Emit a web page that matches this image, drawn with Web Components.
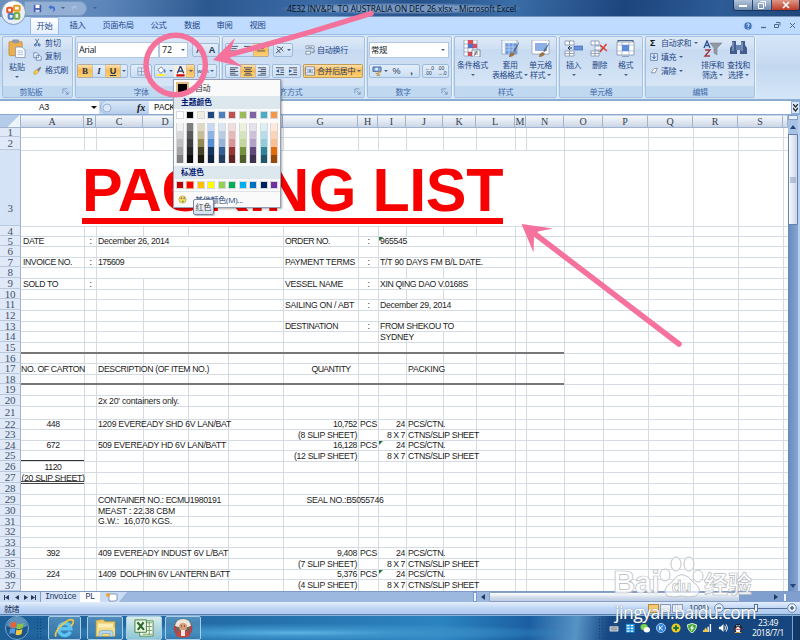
<!DOCTYPE html>
<html lang="zh-CN">
<head>
<meta charset="utf-8">
<title>Packing list</title>
<style>
html,body{margin:0;padding:0;width:800px;height:640px;overflow:hidden}
</style>
</head>
<body>
<excel-window></excel-window>
<script>
const UI='"Open Sans","Noto Sans CJK SC",sans-serif';
const ICONS={
save:'<path d="M1 1h9v9H1z" fill="#4356b4"/><path d="M3 1h5v4H3z" fill="#fff"/><path d="M3 7h5v3H3z" fill="#cfd8f4"/>',
undo:'<path d="M2 4l3-3v2q5-1 5 4-1 3-4 3 2-1 2-3 0-2-3-2v2z" fill="#3b6fd0"/>',
redo:'<path d="M10 4L7 1v2Q2 2 2 7q1 3 4 3-2-1-2-3 0-2 3-2v2z" fill="#a9bfdf"/>',
office:'<circle cx="13" cy="13" r="12.500" fill="#e9eff8" stroke="#7f95b5"/><ellipse cx="13" cy="8" rx="9" ry="6" fill="#fff"/><g fill="none" stroke-width="2.200"><rect x="6.500" y="8" width="5" height="5" rx="1.200" stroke="#e2562a"/><rect x="13.500" y="6" width="6" height="5" rx="1.200" stroke="#e89a25"/><rect x="8" y="14.500" width="5" height="5" rx="1.200" stroke="#4a7fd0"/><rect x="14" y="13.500" width="5" height="6" rx="1.200" stroke="#79ae3a"/></g>',
paste:'<rect x="1" y="2" width="14" height="15" rx="1.500" fill="#edae4e" stroke="#b98233" stroke-width=".7"/><rect x="4.500" y="0" width="7" height="4" rx="1" fill="#8e98a6"/><path d="M8 8h7l3 3v8H8z" fill="#fff" stroke="#788eb1" stroke-width=".8"/><path d="M10 12h6M10 14h6M10 16h6" stroke="#8fa9d0" stroke-width=".7"/>',
cut:'<path d="M3 1l4 7M7 1L3 8" stroke="#54749d" stroke-width="1.100"/><circle cx="3" cy="8.500" r="1.300" fill="none" stroke="#294f91"/><circle cx="7.500" cy="8.500" r="1.300" fill="none" stroke="#294f91"/>',
copy:'<path d="M1 1h4l2 2v4H1zM4 4h4l2 2v4H4z" fill="#fff" stroke="#4668a5" stroke-width=".9"/>',
brush:'<path d="M1 7l4-3 2 3-3 3H1z" fill="#f5c945" stroke="#a97e28" stroke-width=".5"/><path d="M5 4l4-3 1 1-3 5z" fill="#777e8e"/>',
border:'<path d="M1 1h9v9H1zM5.500 1v9M1 5.500h9" fill="none" stroke="#7c91b5" stroke-width=".8"/>',
fill:'<path d="M2 4l4-3 3 4-4 3z" fill="#fff" stroke="#586e91" stroke-width=".8"/><path d="M9 4q2 2 0 3" stroke="#3565ba" fill="none" stroke-width="1.200"/><path d="M1 9h9v2H1z" fill="#ffef20"/>',
fontc:'<path d="M2 8L5.500 0 9 8M3.500 5.500h4" stroke="#283a68" fill="none" stroke-width="1.400"/><path d="M1 9h9v2.500H1z" fill="#d40b0b"/>',
vtop:'<path d="M1 1.500h9M2.500 4h6M1 6.500h9" stroke="#505b6c" stroke-width="1.100"/>',
left:'<path d="M1 2h9M1 4h6M1 6h9M1 8h6M1 10h9" stroke="#3c4657"/>',
center:'<path d="M1 2h9M2.500 4h6M1 6h9M2.500 8h6M1 10h9" stroke="#3c4657"/>',
right:'<path d="M1 2h9M4 4h6M1 6h9M4 8h6M1 10h9" stroke="#3c4657"/>',
indl:'<path d="M1 2h9M6 4.500h4M6 7h4M1 9.500h9" stroke="#3c4657"/><path d="M4.500 3.500v4L1 5.500z" fill="#2c57a7"/>',
indr:'<path d="M1 2h9M6 4.500h4M6 7h4M1 9.500h9" stroke="#3c4657"/><path d="M1 3.500v4l3.500-2z" fill="#2c57a7"/>',
orient:'<path d="M1 9l8-7M2 4l4 5" stroke="#39465a" stroke-width="1"/><path d="M2 2l4 1 3 4" stroke="#39465a" fill="none" stroke-width=".9"/>',
wrap:'<path d="M1 1h9v3H1zM1 7h5v3H1z" fill="#fff" stroke="#667993" stroke-width=".8"/><path d="M3 2.500h5M10 5v3H7" stroke="#667993" fill="none"/>',
merge:'<path d="M.5 1h10v9H.5z" fill="#fff" stroke="#59729c" stroke-width=".8"/><path d="M.5 3.500h10M.5 7.500h10" stroke="#59729c" stroke-width=".7"/><path d="M2 5.500h2M7 5.500h2M4.500 7l1-3 1 3" stroke="#274e98" fill="none" stroke-width=".8"/>',
money:'<path d="M1 1h9v5H1z" fill="#7fa5d8" stroke="#315a99" stroke-width=".8"/><circle cx="5" cy="3.500" r="1.500" fill="#e9f1fb"/><path d="M4 8h4M5 10h4M7 6.500h3" stroke="#c08a22" stroke-width="1.300"/>',
cond:'<path d="M1 0h13v16H1zM1 4h13M1 8h13M1 12h13M5 0v16M10 0v16" fill="#fff" stroke="#7f93b3" stroke-width=".7"/><path d="M5 0h5v4H5zM5 12h5v4H5z" fill="#dc4b57"/><path d="M5 4h5v4H5z" fill="#4f74c6"/><path d="M10 4h4v4h-4z" fill="#dc4b57"/><rect x="9" y="10" width="8" height="7" fill="#fff" stroke="#586a86" stroke-width=".7"/><path d="M11 12h4M11 14h4M14 11l-3 5" stroke="#333" stroke-width=".6"/>',
tblfmt:'<path d="M1 0h15v14H1z" fill="#fff" stroke="#8296b6" stroke-width=".7"/><path d="M4 3h12v11H4z" fill="#6f9add"/><path d="M1 3h15M1 7h15M1 10h15M4 0v14M8 0v14M12 0v14" stroke="#d3dff1" stroke-width=".7"/><path d="M18 2l-6 9 2 1 4-9z" fill="#566b8b"/><path d="M8 17q0-4 4-5l2 2q-2 3-6 3z" fill="#9a7346"/>',
cellsty:'<path d="M1 0h17v14H1z" fill="#fff" stroke="#8296b6" stroke-width=".7"/><path d="M4 3h12v8H4z" fill="#8fb0e6"/><path d="M18 3l-6 8 2 1 4-8z" fill="#566b8b"/><path d="M8 17q0-4 4-5l2 2q-2 3-6 3z" fill="#9a7346"/>',
ins:'<path d="M1 1h9v4H1zM5.500 1v4M1 11h9v5H1zM5.500 11v5M1 13.500h9" fill="#fff" stroke="#7e8ea8" stroke-width=".8"/><path d="M10 6h9v4h-9z" fill="#6492dc" stroke="#3c66ad" stroke-width=".6"/><path d="M8 8H4M6 6L4 8l2 2" stroke="#2b3e63" fill="none"/>',
del:'<path d="M1 1h8v4H1zM5 1v4M5 6h6v4H5zM1 11h8v5H1zM5 11v5M1 13.500h8" fill="#fff" stroke="#7e8ea8" stroke-width=".8"/><path d="M10 5l7 6M16.500 4L10 12" stroke="#dc3b31" stroke-width="1.500"/>',
fmt:'<path d="M1 2h17v13H1z" fill="#fff" stroke="#7e8ea8" stroke-width=".8"/><path d="M1 5h17M1 11h17M6 2v13M13 2v13" stroke="#9fb0cc" stroke-width=".7"/><path d="M6 5h7v6H6z" fill="#5f8cda"/><path d="M2 0v2M17 0v2M2 .5h15M6 17h7" stroke="#44597f" stroke-width=".9"/>',
down:'<rect x="1" y="1" width="9" height="9" fill="#e7f0fb" stroke="#4567a4"/><path d="M5.500 2v5M3 5l2.500 3L8 5" stroke="#214fa6" fill="none" stroke-width="1.300"/>',
erase:'<path d="M2 7l4-5h4L7 8H2z" fill="#fff" stroke="#5c6981" stroke-width=".9"/>',
sort:'<path d="M1 8l3-7 3 7M2 5.500h4" stroke="#35559c" fill="none" stroke-width="1.400"/><path d="M2 10h5l-5 6h5" stroke="#a23647" fill="none" stroke-width="1.400"/><path d="M7 3h12l-5 5v7l-3-2V8z" fill="#929aa5" stroke="#6d747e" stroke-width=".5"/>',
find:'<path d="M3 1h4v4l1 2v7H1V8l2-3zM12 1h4v4l2 3v6h-7V7l1-2z" fill="#425d8d"/><path d="M7 5h5v5H7z" fill="#6683b4"/><path d="M4 2v9M13 2v9" stroke="#a9bde0"/>',
help:'<circle cx="5.500" cy="5.500" r="4.500" fill="#3d73c2" stroke="#bcd3f0"/><path d="M4 4q1.500-2 3 0 0 1-1.500 1.500v1M5.500 7.500v1" stroke="#fff" fill="none"/>',
launch:'<path d="M1 6V1h5M3 3l4 4M7 4v3H4" stroke="#6f8db8" fill="none" stroke-width=".9"/>',
pal:'<circle cx="5.500" cy="5.500" r="4.500" fill="#eedd63" stroke="#a7913a" stroke-width=".6"/><circle cx="4" cy="4" r="1" fill="#bf3131"/><circle cx="7.500" cy="4" r="1" fill="#3863bd"/><circle cx="6" cy="8" r="1" fill="#2d8a3f"/>',
newtab:'<path d="M4 2h8v6l-2 1H4z" fill="#fff" stroke="#7287ab" stroke-width=".8"/><circle cx="3" cy="3" r="2" fill="#eaa43c"/>',
orb:'<circle cx="12" cy="12" r="11.500" fill="#1e5587" stroke="#76a9cf"/><path d="M2 10a10 9 0 0 1 20 0q-10 5-20 0z" fill="#7eb3d6" opacity=".65"/><path d="M6 7q3-2 5.500 0l-1 5Q8 10.500 5 12z" fill="#e86236"/><path d="M12.500 7.500q3 1.500 6-.5l-1 5q-3 2-6 .5z" fill="#8bc53f"/><path d="M5 13q3-1.500 5.500 0l-1 5Q7 16.500 4 18z" fill="#4d9be0"/><path d="M11.500 13.500q3 1.500 6-.5l-1 5q-3 2-6 .5z" fill="#fbca3a"/>',
ie:'<path d="M17 14A6.300 6.300 0 1 1 17.500 10.800H6" fill="none" stroke="#5cc4f4" stroke-width="3.800"/><path d="M2 19Q0 15 8 7 17-1 20 2q1 2-2 6" fill="none" stroke="#f0c63c" stroke-width="1.800"/>',
folder:'<path d="M1 2l7-1 2 2h10v15H1z" fill="#eacb69" stroke="#b49547" stroke-width=".6"/><path d="M3 5h15v5H3z" fill="#f9edb8"/><path d="M2 9h18v8H2z" fill="#f2dc8c"/><path d="M4 18v-3q0-3 3-3h8q3 0 3 3v3h-3v-3H7v3z" fill="#b5d9ed" stroke="#739eba" stroke-width=".6"/>',
excel:'<path d="M6 2h14v16H6z" fill="#fff" stroke="#55894f"/><path d="M9 4h10M9 8h10M9 12h10M9 16h10M16 3v14" stroke="#66a15a"/><path d="M1 1h12v13H1z" fill="#eef8e8" stroke="#3d7e38"/><path d="M3.500 3.500l7 8M10 3.500l-6 8" stroke="#276a2a" stroke-width="2.200"/>',
avatar:'<circle cx="10" cy="10" r="9.500" fill="#66695b"/><path d="M2 8q1-7 8-7t8 7l-3 1H5z" fill="#eee5dc"/><circle cx="10" cy="9" r="4" fill="#d99b77"/><path d="M3 18q1-6 7-6t7 6q-7 3-14 0z" fill="#c84343"/><path d="M8 12h4v6H8z" fill="#f1eae2"/><path d="M8 8h1M11 8h1" stroke="#322"/><path d="M2 8q0 5 2 7M18 8q0 5-2 7" stroke="#c33c45" stroke-width="2" fill="none"/>',
kbd:'<path d="M1 4h9v5H1z" fill="#bfc4c8" stroke="#e5e8ea" stroke-width=".6"/><path d="M2 5.500h7M2 7.500h7M6 4V2h3" stroke="#59626b" stroke-width=".6" fill="none"/>',
t1:'<rect x="1" y="1" width="9.500" height="9.500" fill="#2a9ce8"/><path d="M2 3h3M2 6h3M2 9h3M6.500 3H9M6.500 6H9M6.500 9H9" stroke="#fff" stroke-width="1.400"/>',
t2:'<ellipse cx="4.500" cy="4.500" rx="4" ry="3.500" fill="#78d34f"/><ellipse cx="7.500" cy="7.500" rx="3.500" ry="3" fill="#fff"/>',
t3:'<circle cx="5.500" cy="5.500" r="5" fill="#2c80dc" stroke="#d8ecff" stroke-width=".8"/><path d="M4 3v5M7.500 3L4.500 5.500 7.500 8" stroke="#fff" fill="none"/>',
t4:'<circle cx="5.500" cy="5.500" r="5" fill="#f4ce26"/><path d="M5.500 2.500v6M2.500 5.500h6" stroke="#15783a" stroke-width="2.200"/>',
t5:'<path d="M5.500.5l5 1.500q0 6-5 9-5-3-5-9z" fill="#4aaa3c" stroke="#e8f7e3"/><path d="M6 2L3.500 6H5L4.500 9 8 5H6z" fill="#fff"/>',
t6:'<path d="M1 10h1V8H1zM3.500 10h1.500V6.500H3.500zM6 10h1.500V4H6zM8.500 10H10V1H8.500z" fill="#fff"/><path d="M1 10l3-5 3 5z" fill="#f3c834"/>',
t7:'<path d="M1 4h2l3-3v9L3 7H1z" fill="#fff"/><path d="M7.500 3q1.500 2.500 0 5M9 1.500q3 4 0 8" stroke="#fff" fill="none"/>',
t8:'<ellipse cx="5.500" cy="6" rx="4" ry="5" fill="#141a20"/><ellipse cx="5.500" cy="7.500" rx="2.500" ry="3" fill="#fff"/><path d="M2 5.500q3.500 2 7 0v1.500q-3.500 1.500-7 0z" fill="#e02f2b"/><circle cx="4.300" cy="3" r=".8" fill="#fff"/><circle cx="6.700" cy="3" r=".8" fill="#fff"/><path d="M2 10.500h3M6 10.500h3" stroke="#efaa28" stroke-width="1.300"/>'
};
function def(name,css,html,after){
  const t=document.createElement('template');
  t.innerHTML='<style>'+css+'</style>'+html;
  customElements.define(name,class extends HTMLElement{
    connectedCallback(){
      if(this.shadowRoot)return;
      this.attachShadow({mode:'open'}).append(t.content.cloneNode(true));
      if(after)after(this,this.shadowRoot);
    }
  });
}
/* Inline SVG glyph: name, w, h and the view box size v. */
def('x-icon',':host{display:inline-block;flex:none;line-height:0}svg{display:block}','',(el,r)=>{
  const w=el.getAttribute('w')||11,h=el.getAttribute('h')||w,v=el.getAttribute('v')||'11 11';
  r.innerHTML+=`<svg width="${w}" height="${h}" viewBox="0 0 ${v}">${ICONS[el.getAttribute('name')]}</svg>`;
});
/* Text tracked so that it fills the width given in w. */
def('fit-text',':host{display:inline-block;white-space:pre;flex:none}span{display:inline-block}','<span></span>',(el,r)=>{
  const s=r.querySelector('span'),t=el.getAttribute('t'),w=+el.getAttribute('w');
  s.textContent=t;
  if(w){const n=s.getBoundingClientRect().width;s.style.letterSpacing=((w-n)/t.length)+'px';}
});
def('drop-arrow',':host{display:inline-block;flex:none;width:0;height:0;border:2px solid transparent;border-top:2.500px solid #45618d;border-bottom:0}','');

def('title-bar',`:host{display:flex;height:17px;align-items:center;background:linear-gradient(100deg,#6d91bd 0,#5d87bb 13%,#2c5890 26%,#3c6ba6 40%,#265089 52%,#3a6da6 64%,#1d447d 78%,#2d5c96 90%,#1f467a);font:8.300px ${UI};border-bottom:1px solid #7594bd;box-sizing:border-box}
.q{display:flex;align-items:center;gap:5px;margin-left:24px;padding:1px 9px 1px 8px;width:63px;box-sizing:border-box;height:15px;background:#93afd3;border:1px solid #7898c4;border-radius:0 8px 8px 0}
.t{margin-left:185px;padding:0 5px;color:#060d1a;background:radial-gradient(ellipse,#8eacd2bb 45%,transparent 74%);border-radius:6px}
.w{margin-left:auto;display:flex;align-self:flex-start;height:10px;border:1px solid #16345f;border-top:0;border-radius:0 0 3px 3px;overflow:hidden;color:#fff}
.w span{width:18px;display:flex;align-items:center;justify-content:center;border-right:1px solid #26466f;background:linear-gradient(#b5c5da,#6c88ad)}
.w span:last-child{width:27px;background:linear-gradient(#df9788,#bd3a25);border:0}`,
`<div class="q"><x-icon name="save" w="9"></x-icon><x-icon name="undo" w="9"></x-icon><drop-arrow></drop-arrow><x-icon name="redo" w="8"></x-icon></div><drop-arrow style="margin-left:6px"></drop-arrow>
<div class="t"><fit-text w="229" t="4E32 INV&amp;PL TO AUSTRALIA ON DEC 26.xlsx - Microsoft Excel"></fit-text></div>
<div class="w"><span><svg width="8" height="6"><path d="M0 4h8" stroke="#fff" stroke-width="2"/></svg></span><span><svg width="8" height="8"><path d="M2.500.5h5v5M.5 2.500h5v5h-5z" fill="none" stroke="#fff"/></svg></span><span><svg width="8" height="8"><path d="M1 1l6 6M7 1L1 7" stroke="#fff" stroke-width="1.600"/></svg></span></div>`);

def('tab-strip',`:host{display:flex;height:17px;background:#bfdbff;font:8.300px/16px ${UI};color:#1f4787;padding-left:30px;box-sizing:border-box}
div{text-align:center;flex:none}.on{width:29px;background:linear-gradient(#fff,#e4effc);border:1px solid #9bbce8;border-bottom:0;border-radius:2px 2px 0 0;box-sizing:border-box}
.r{margin-left:auto;display:flex;gap:8px;align-items:center;padding-right:4px}`,
`<div class="on"><fit-text t="开始" w="16"></fit-text></div><div style="width:37px"><fit-text t="插入" w="16"></fit-text></div><div style="width:44px"><fit-text t="页面布局" w="31"></fit-text></div><div style="width:37px"><fit-text t="公式" w="16"></fit-text></div><div style="width:30px"><fit-text t="数据" w="16"></fit-text></div><div style="width:35px"><fit-text t="审阅" w="16"></fit-text></div><div style="width:31px"><fit-text t="视图" w="16"></fit-text></div>
<div class="r"><x-icon name="help" w="10"></x-icon><svg width="5" height="6"><path d="M0 4.500h5" stroke="#526a90" stroke-width="1.300"/></svg><svg width="7" height="7"><path d="M2 .5h4v3M.5 2.500h4v3h-4z" fill="none" stroke="#526a90"/></svg><svg width="7" height="7"><path d="M1 1l5 5M6 1L1 6" stroke="#526a90"/></svg></div>`);

def('ribbon-group',`:host{display:flex;flex-direction:column;flex:none;box-sizing:border-box;border:1px solid #a4c0e0;border-radius:2px;background:linear-gradient(#dde9f7,#cfe0f4 20%,#c7daf1 21%,#dbe9f8);box-shadow:1px 0 #edf4fc}
.b{flex:1;min-height:0;overflow:hidden}.l{height:11px;background:#c1d8f1;color:#3e6aaa;font:8px/10px ${UI};display:flex;justify-content:center;align-items:center;position:relative}
:host([launch]) .l{padding-right:13px}
x-icon{position:absolute;right:3px;top:2px}`,`<div class="b"><slot></slot></div><div class="l"><x-icon name="launch" w="7" v="8 8"></x-icon></div>`,(el,r)=>{
  const f=r.querySelector('.l');
  const n=document.createElement('fit-text');n.setAttribute('t',el.getAttribute('label'));n.setAttribute('w',el.getAttribute('lw'));f.prepend(n);
  if(!el.hasAttribute('launch'))f.querySelector('x-icon').remove();
});
def('big-btn',`:host{display:flex;flex-direction:column;align-items:center;flex:none;font:8px/10px ${UI};color:#1f4787}x-icon{margin-bottom:3px}.r{display:flex;align-items:center;height:10px;gap:2px}`,``,(el,r)=>{
  const g=k=>el.getAttribute(k);
  const d=document.createElement('div');
  d.style.display='contents';
  d.innerHTML=`<x-icon name="${g('icon')}" w="19" h="17" v="19 17"></x-icon><div class="r"><fit-text t="${g('a')}" w="${g('aw')}"></fit-text></div><div class="r">${g('b')?`<fit-text t="${g('b')}" w="${g('bw')}"></fit-text>`:''}<drop-arrow></drop-arrow></div>`;
  r.append(d);
});
def('tool-btns',`:host{display:inline-flex;flex:none;height:14px;align-items:center;border:1px solid #9ebbdd;border-radius:2px;box-sizing:border-box;background:linear-gradient(#e4eefa,#cbdef4);font:9px/12px "Liberation Sans",sans-serif;color:#26364f}
::slotted(*){display:flex;align-items:center;justify-content:center;height:12px;box-sizing:border-box}
::slotted(.on){background:linear-gradient(#fde2ae,#f9b951 45%,#fcd075);box-shadow:0 0 0 .5px #c49b5b}`,'<slot></slot>');

def('ribbon-bar',`:host{display:flex;height:66px;gap:2px;padding:1px 2px 1px 2px;background:linear-gradient(#d7e6f8,#c3d8f0 50%,#d5e6f8);border-top:1px solid #9bbce8;border-bottom:1px solid #8faed6;box-sizing:border-box;color:#1f4787;font:8px/10px ${UI}}
.c{display:flex;height:100%}.row{display:flex;align-items:center}.in{background:#fff;border:1px solid #b0c8e6;box-sizing:border-box;height:16px;color:#10151d;display:flex;align-items:center;font-size:9px}
.s{display:flex;align-items:center;gap:3px;height:14px}`,
`<ribbon-group label="剪贴板" lw="23" launch style="width:71px"><div class="c" style="padding:2px 0 0 3px;gap:5px">
 <div style="display:flex;flex-direction:column;align-items:center;width:22px"><x-icon name="paste" w="18" h="20" v="19 20"></x-icon><fit-text t="粘贴" w="16" style="margin-top:3px"></fit-text><drop-arrow style="margin-top:4px"></drop-arrow></div>
 <div style="margin-top:-3px"><div class="s" style="height:13px"><x-icon name="cut" w="9"></x-icon><fit-text t="剪切" w="16"></fit-text></div><div class="s"><x-icon name="copy" w="9"></x-icon><fit-text t="复制" w="16"></fit-text></div><div class="s"><x-icon name="brush" w="9"></x-icon><fit-text t="格式刷" w="23"></fit-text></div></div></div></ribbon-group>
<ribbon-group label="字体" lw="15" launch style="width:145px"><div style="padding:5px 0 0 1px">
 <div class="row"><div class="in" style="width:82px;padding-left:1px"><fit-text t="Arial" w="17"></fit-text></div><div class="in" style="width:29px;padding:0 2px;justify-content:space-between"><fit-text t="72" w="10"></fit-text><drop-arrow></drop-arrow></div>
 <tool-btns style="margin-left:4px"><span style="width:13px;font-size:10px">A</span><span style="width:12px;font-weight:bold">A</span></tool-btns></div>
 <div class="row" style="margin-top:6px;gap:2px"><tool-btns><b class="on" style="width:14px;font-family:Liberation Serif">B</b><i style="width:14px;font-family:Liberation Serif;font-weight:bold">I</i><u class="on" style="width:14px;font-weight:bold">U</u><span style="width:7px"><drop-arrow></drop-arrow></span></tool-btns>
 <tool-btns><span style="width:20px"><x-icon name="border" w="9"></x-icon></span></tool-btns>
 <tool-btns><span style="width:12px"><x-icon name="fill" w="10"></x-icon></span><span style="width:7px"><drop-arrow></drop-arrow></span><span style="width:13px;background:#f5f0e6"><x-icon name="fontc" w="11" v="11 12"></x-icon></span><span class="on" style="width:7px"><drop-arrow></drop-arrow></span></tool-btns>
 <tool-btns><span style="width:10px;font-size:6px">wén</span><span style="width:8px"><drop-arrow></drop-arrow></span></tool-btns></div></div></ribbon-group>
<ribbon-group label="对齐方式" lw="31" launch style="width:143px"><div style="padding:6px 0 0 2px">
 <div class="row"><tool-btns><span style="width:15px"><x-icon name="vtop" w="10"></x-icon></span><span style="width:13px"><x-icon name="vtop" w="10"></x-icon></span><span class="on" style="width:14px"><x-icon name="vtop" w="10"></x-icon></span></tool-btns><tool-btns style="margin-left:4px"><span style="width:12px"><x-icon name="orient" w="10"></x-icon></span><span style="width:6px"><drop-arrow></drop-arrow></span></tool-btns><x-icon name="wrap" w="10" style="margin:0 2px 0 12px"></x-icon><fit-text t="自动换行" w="31"></fit-text></div>
 <div class="row" style="margin-top:7px"><tool-btns><span style="width:15px"><x-icon name="left" w="10"></x-icon></span><span class="on" style="width:14px"><x-icon name="center" w="10"></x-icon></span><span style="width:14px"><x-icon name="right" w="10"></x-icon></span></tool-btns><tool-btns style="margin-left:2px"><span style="width:13px"><x-icon name="indl" w="10"></x-icon></span><span style="width:14px"><x-icon name="indr" w="10"></x-icon></span></tool-btns><tool-btns style="margin-left:2px;border-color:#c39a59"><span class="on" style="width:58px;gap:2px;color:#263c66;font:8px/10px ${UI.replace(/"/g,'')}"><x-icon name="merge" w="10"></x-icon><fit-text t="合并后居中" w="38"></fit-text><drop-arrow></drop-arrow></span></tool-btns></div></div></ribbon-group>
<ribbon-group label="数字" lw="15" launch style="width:85px"><div style="padding:5px 0 0 1px"><div class="in" style="width:80px;padding:0 3px 0 1px;justify-content:space-between;font-size:8.300px"><fit-text t="常规" w="16"></fit-text><drop-arrow></drop-arrow></div>
 <div class="row" style="margin-top:6px;gap:2px"><tool-btns><span style="width:13px"><x-icon name="money" w="10"></x-icon></span><span style="width:6px"><drop-arrow></drop-arrow></span><span style="width:15px">%</span><b style="width:15px">,</b></tool-btns><tool-btns><span style="width:13px;font:5px/5px Liberation Sans;white-space:pre">←.0
.00</span><span style="width:12px;font:5px/5px Liberation Sans;white-space:pre">.00
→.0</span></tool-btns></div></div></ribbon-group>
<ribbon-group label="样式" lw="15" style="width:103px"><div class="c" style="padding:3px 0 0 2px;gap:4px"><big-btn icon="cond" a="条件格式" aw="31"></big-btn><big-btn icon="tblfmt" a="套用" aw="15" b="表格格式" bw="30"></big-btn><big-btn icon="cellsty" a="单元格" aw="23" b="样式" bw="15" style="margin-left:-3px"></big-btn></div></ribbon-group>
<ribbon-group label="单元格" lw="23" style="width:84px"><div class="c" style="padding:3px 0 0 4px;gap:7px"><big-btn icon="ins" a="插入" aw="15"></big-btn><big-btn icon="del" a="删除" aw="15"></big-btn><big-btn icon="fmt" a="格式" aw="15"></big-btn></div></ribbon-group>
<ribbon-group label="编辑" lw="15" style="width:110px"><div class="c" style="padding:0 0 0 4px;gap:2px"><div style="width:49px;margin-top:-1px"><div class="s"><b style="width:8px;font-size:9px;color:#111">Σ</b><fit-text t="自动求和" w="30"></fit-text><drop-arrow></drop-arrow></div><div class="s"><x-icon name="down" w="8"></x-icon><fit-text t="填充" w="15"></fit-text><drop-arrow></drop-arrow></div><div class="s"><x-icon name="erase" w="8"></x-icon><fit-text t="清除" w="15"></fit-text><drop-arrow></drop-arrow></div></div><big-btn icon="sort" a="排序和" aw="23" b="筛选" bw="15" style="margin-top:3px"></big-btn><big-btn icon="find" a="查找和" aw="23" b="选择" bw="15" style="margin-top:3px;margin-left:1px"></big-btn></div></ribbon-group>`);

def('formula-bar',`:host{display:flex;height:15px;background:#c4d9f2;box-sizing:border-box;border-top:1px solid #8aa9d0;border-bottom:1px solid #8aa9d0;color:#111}
.n{width:99px;background:#fff;display:flex;align-items:center;font:9px "Liberation Mono",monospace}.f{width:49px;display:flex;align-items:center;justify-content:flex-end;font:italic bold 10px "Liberation Serif";box-sizing:border-box;padding-right:4px;border-left:1px solid #8aa9d0;border-radius:8px 0 0 8px;margin-left:1px;background:linear-gradient(#d9e7f8,#b7cfec)}
.f svg{margin-right:auto}.v{flex:1;background:#fff;display:flex;align-items:center;font:9px "Liberation Mono",monospace;padding-left:5px}.x{width:9px;text-align:center;border:1px solid #8fb0dd;box-sizing:border-box;background:#d7e7fa}`,
`<div class="n"><fit-text t="A3" w="10" style="margin-left:39px"></fit-text><drop-arrow style="margin-left:42px;border-width:3px;border-top-color:#111;border-bottom:0"></drop-arrow></div><div class="f"><svg width="12" height="12"><circle cx="6" cy="6" r="4" fill="#d9e7f8" stroke="#9bb3d4"/></svg><fit-text t="fx" w="8"></fit-text></div><div class="v"><fit-text t="PACKING LIST" w="61"></fit-text></div><div class="x"><svg width="5" height="8"><path d="M0 0l2.500 3L5 0M0 4l2.500 3L5 4" fill="none" stroke="#222" stroke-width="1.200"/></svg></div>`);

const CX=[0,21,84,96,143,188,228,283,358,378,406,443,476,515,526,564,603,648,693,738,783,788];
const RY=[115,128,137,150,226,236,246,257,267,278,289,299,310,321,331,342,353,363,374,384,395,406,419,429,440,450,461,472,483,494,505,516,526,537,547,558,569,579,591];
/* row, first column, last column (1 = A), text, text width, alignment, extra style */
const W='background:#fff;';
const CELLS=[
[3,1,14,'PACKING LIST',421,'c','big'],
[5,1,1,'DATE',21],[5,2,2,':',2,'c'],[5,3,5,'December 26, 2014',71,'l',W],
[6,3,4,'',0,'l',W],
[7,1,1,'INVOICE NO.',49],[7,2,2,':',2,'c'],[7,3,4,'175609',26,'l',W],[8,3,4,'',0,'l',W],
[9,1,1,'SOLD TO',35],[9,2,2,':',2,'c'],
[5,7,7,'ORDER NO.',45],[5,8,8,':',2,'c'],[5,9,12,'965545',27,'l',W],[6,9,12,'',0,'l',W],
[7,7,7,'PAYMENT TERMS',70],[7,8,8,':',2,'c'],[7,9,11,'T/T 90 DAYS FM B/L DATE.',103,'l',W],
[9,7,7,'VESSEL NAME',58],[9,8,8,':',2,'c'],[9,9,11,'XIN QING DAO V.0168S',88,'l',W],
[11,7,7,'SAILING ON / ABT',69],[11,8,8,':',2,'c'],[11,9,11,'December 29, 2014',71,'l',W],[12,9,11,'',0,'l',W],
[13,7,7,'DESTINATION',53],[13,8,8,':',2,'c'],[13,9,11,'FROM SHEKOU TO',74,'l',W],[14,9,10,'SYDNEY',34],
[17,1,1,'NO. OF CARTON',64,'c'],[17,3,6,'DESCRIPTION (OF ITEM NO.)',111],[17,7,8,'QUANTITY',39,'c'],[17,10,10,'PACKING',37,'l'],
[20,3,5,"2x 20' containers only.",81],
[22,1,1,'448',13,'c'],[22,3,6,'1209 EVEREADY SHD 6V LAN/BAT',133],
[24,1,1,'672',13,'c'],[24,3,6,'509 EVEREADY HD 6V LAN/BATT',128],
[26,1,1,'1120',17,'c'],[27,1,1,'(20 SLIP SHEET)',63,'c'],
[29,3,6,'CONTAINER NO.: ECMU1980191',123],[30,3,5,'MEAST : 22.38 CBM',77],[31,3,5,'G.W.:  16,070 KGS.',74],
[29,7,9,'SEAL NO.:B5055746',77,'c'],
[34,1,1,'392',13,'c'],[34,3,6,'409 EVEREADY INDUST 6V L/BAT',130],
[36,1,1,'224',13,'c'],[36,3,6,'1409  DOLPHIN 6V LANTERN BATT',132]];
[[22,'10,752',24,'(8 SLIP SHEET)',59],[24,'16,128',24,'(12 SLIP SHEET)',63],[34,'9,408',20,'(7 SLIP SHEET)',59],[36,'5,376',20,'(4 SLIP SHEET)',59]].forEach(([r,q,qw,s,sw])=>{
  CELLS.push([r,7,7,q,qw,'r'],[r,8,8,'PCS',17],[r,9,9,'24',9,'r'],[r,10,10,'PCS/CTN.',37],[r+1,7,7,s,sw,'r'],[r+1,9,9,'8 X 7',18,'r'],[r+1,10,11,'CTNS/SLIP SHEET',71]);
});
def('sheet-grid',`:host{display:grid;width:788px;height:476px;background:#fff;font:8.700px "Liberation Sans",Arial,sans-serif;color:#1c1c1c;overflow:hidden}
.v{border-right:1px solid #d5dbe2;margin-right:-1px}.h{border-bottom:1px solid #d5dbe2;margin-bottom:-1px}
.ch,.rh{display:flex;align-items:center;justify-content:center;font:10px/10px "Liberation Serif",serif;color:#333f52;box-sizing:border-box}
.ch{background:linear-gradient(#f5f8fc,#dce4ef 60%,#cbd6e6);border-right:1px solid #9fb3cf;border-bottom:1px solid #9fb3cf;border-top:1px solid #c6d4e8}
.rh{background:#dfe9f7;border-right:1px solid #9fb3cf;border-bottom:1px solid #b9c8dd;font-size:11px;letter-spacing:-.3px;color:#45536a}
.rh.s{background:#d5e3f6}.corner{background:linear-gradient(135deg,#b4cce9 60%,#eef4fb 61%);border-right:1px solid #9fb3cf;border-bottom:1px solid #9fb3cf}
.c{display:flex;align-items:center;padding:0 1px;margin:1px 0 0 1px;min-width:0;min-height:0;white-space:pre}
.c fit-text{line-height:9px}.l{padding-left:1px}.ce{justify-content:center}.r{justify-content:flex-end}
.big{background:#fff;font-weight:bold;font-size:61px;color:#f80000;padding:0 0 0 60px;align-items:flex-start}
.big fit-text{line-height:52px;height:54px;border-bottom:6px solid #f80000;margin-top:13px}
.k{background:#777;height:2px;align-self:end;margin-bottom:-1px}.m{width:0;height:0;border-top:4px solid #24713a;border-right:4px solid transparent;margin:1px}`,``,(el,r)=>{
  const dif=a=>a.slice(1).map((v,i)=>v-a[i]+'px').join(' ');
  el.style.gridTemplateColumns=dif(CX);el.style.gridTemplateRows=dif(RY);
  const add=(cls,row,rowEnd,col,colEnd,html='',st='')=>{
    const d=document.createElement('div');d.className=cls;d.style.cssText=st+`grid-area:${row}/${col}/${rowEnd}/${colEnd};`;d.innerHTML=html;r.append(d);};
  for(let i=2;i<22;i++)add('v',2,39,i,i+1);
  for(let i=2;i<39;i++)add('h',i,i+1,2,22);
  add('corner',1,2,1,2);
  for(let i=0;i<20;i++)add('ch',1,2,i+2,i+3,i<19?'ABCDEFGHIJKLMNOPQRS'[i]:'');
  for(let i=1;i<38;i++)add('rh'+(i==3?' s':''),i+1,i+2,1,2,i,i==3?'padding-top:40px;':'');
  CELLS.forEach(([row,a,b,t,w,al,st])=>{
    if(st==='big')return add('c big',row+1,row+2,a+1,b+2,`<fit-text t="${t}" w="${w}"></fit-text>`);
    add('c '+(al==='c'?'ce':al||'l'),row+1,row+2,a+1,b+2,t?`<fit-text t="${t}" w="${w}"></fit-text>`:'',st||'');});
  add('k',16,17,2,16);add('k',19,20,2,16);
  add('k',26,27,2,3,'','height:1px;margin-bottom:0;background:#333;');
  add('k',28,29,2,3,'','height:1px;border:solid #444;border-width:1px 0;background:#fff;');
  [5,24,36].forEach(n=>add('m',n+1,n+2,10,11));
});
def('v-scroll',`:host{display:flex;flex-direction:column;width:12px;box-sizing:border-box;border-right:2px solid #b9d1ef;background:linear-gradient(90deg,#668abd,#86a5d0)}
.p{height:5px;background:#e5eefa;border:1px solid #879fc2;box-sizing:border-box}.a{height:14px;display:flex;align-items:center;justify-content:center;background:#a8c2e6}.t{height:91px;background:linear-gradient(90deg,#f7fafd,#c8d5e8);border:1px solid #667fa8;box-sizing:border-box;border-radius:1px;display:flex;align-items:center;justify-content:center}.e{margin-top:auto;height:10px;background:none}`,
`<div class="p"></div><div class="a"><svg width="6" height="4"><path d="M0 4l3-4 3 4z" fill="#284577"/></svg></div><div class="t"><svg width="6" height="6"><path d="M0 1h6M0 3h6M0 5h6" stroke="#8397b5"/></svg></div><div class="a e"><svg width="6" height="4"><path d="M0 0l3 4 3-4z" fill="#284577"/></svg></div>`);
def('sheet-tabs',`:host{display:flex;height:11px;background:#9db8de;border-top:1px solid #7d9bc8;box-sizing:border-box;font:8.500px/10px "Liberation Mono",monospace;color:#24395f}
.n{width:40px;background:#c9dcf3;display:flex;align-items:center;justify-content:space-evenly;padding:0 1px;box-sizing:border-box}
.i{width:40px;background:#d6e4f7;text-align:center;border-left:1px solid #7f9cc5;box-sizing:border-box}.p{width:20px;background:#fff;text-align:center}.w{width:27px;background:#c9dcf3;clip-path:polygon(0 0,100% 0,70% 100%,0 100%);padding-left:5px;box-sizing:border-box}
.f{width:346px}.d{width:4px;background:#eef4fc;border:1px solid #7d9bc8;box-sizing:border-box}.a{width:12px;display:flex;align-items:center;justify-content:center}.t{width:251px;background:linear-gradient(#fff,#d2ddec 55%,#bccbe1);border:1px solid #879fc4;box-sizing:border-box;border-radius:1px}.g{flex:1;background:#7fa0cf;display:flex;align-items:center;justify-content:flex-end;gap:5px;padding-right:13px}`,
`<div class="n"><svg width="38" height="7"><path d="M4 3.500L8 1v5zM14 3.500L18 1v5zM27 3.500L23 1v5zM34 3.500L30 1v5z" fill="#24395f"/><path d="M3.500 1v5M34.500 1v5" stroke="#24395f"/></svg></div><div class="i"><fit-text t="Invoice" w="31"></fit-text></div><div class="p"><fit-text t="PL" w="9"></fit-text></div><div class="w"><x-icon name="newtab" w="13" h="10" v="13 10"></x-icon></div><div class="f"></div><div class="d"></div><div class="a"><svg width="4" height="6"><path d="M4 0v6L0 3z" fill="#24395f"/></svg></div><div class="t"></div><div class="g"><svg width="4" height="6"><path d="M0 0v6l4-3z" fill="#24395f"/></svg><div class="d" style="height:9px"></div></div>`);
def('status-bar',`:host{display:flex;height:13px;align-items:center;background:linear-gradient(#e3eefc,#c0d6f3 50%,#abc9ef);color:#1d3258;font:8px ${UI};border-bottom:1px solid #5b7ba8;box-sizing:border-box;padding:0 3px 0 4px}
.v{display:flex;margin-left:auto;margin-right:6px;gap:1px}.v i{width:11px;height:9px;border:1px solid #899dbb;box-sizing:border-box;background:#e9eff8}.v i:first-child{background:#f7c96c;border-color:#b88b3e}
.z{display:flex;align-items:center;margin-left:5px}.l{width:63px;height:1px;background:#54709c;display:flex;align-items:center;justify-content:center}.l b{width:4px;height:8px;background:#eef4fc;border:1px solid #566f98;box-sizing:border-box}`,
`<fit-text t="就绪" w="15"></fit-text><div class="v"><i></i><i></i><i></i></div><fit-text t="100%" w="20" style="margin-top:-3px"></fit-text><div class="z"><svg width="10" height="10"><circle cx="5" cy="5" r="4.300" fill="#e7f0fb" stroke="#55709b" stroke-width=".8"/><path d="M3 5h4" stroke="#20365e"/></svg><div class="l"><b></b></div><svg width="10" height="10"><circle cx="5" cy="5" r="4.300" fill="#e7f0fb" stroke="#55709b" stroke-width=".8"/><path d="M3 5h4M5 3v4" stroke="#20365e"/></svg></div>`);
def('task-bar',`:host{display:flex;flex:1;align-items:center;background:radial-gradient(ellipse at 37% 70%,#5db3df 0,#3d94cb 14%,transparent 40%),linear-gradient(97deg,#1d5e97 0,#246ea9 30%,#2b83c0 55%,#1b5fa2 66%,#5793c5 72%,#154884 76%,#17457d);color:#fff;font:8.500px/10px ${UI};padding-left:5px;border-top:1px solid #89b4da;box-sizing:border-box}
.g{width:6px;height:21px;background:radial-gradient(circle,#15406b 35%,transparent 40%) 0 0/3px 3px}.b{height:24px;display:flex;align-items:center;justify-content:center;border:1px solid #a9cde6;border-radius:2px;background:linear-gradient(#79b0d488,#3779aa99);box-sizing:border-box;margin-right:3px;flex:none}
.t{display:flex;align-items:center;width:134px;justify-content:space-between}.k{display:flex;flex-direction:column;align-items:center;width:32px;margin:0 8px 0 9px}.e{width:8px;align-self:stretch;background:#123a68;border-left:1px solid #7fa2c7;box-sizing:border-box}`,
`<x-icon name="orb" w="24" v="24 24"></x-icon><div class="g" style="margin:0 6px 0 7px"></div><div class="b" style="width:33px;margin-right:6px"><x-icon name="ie" w="21" v="22 21"></x-icon></div><div class="b" style="width:36px"><x-icon name="folder" w="21" v="21 20"></x-icon></div><div class="b" style="width:36px;background:linear-gradient(#d8ece9,#8cc5d5)"><x-icon name="excel" w="20" v="21 19"></x-icon></div><div class="b" style="width:36px"><x-icon name="avatar" w="20" v="20 20"></x-icon></div>
<div class="g" style="margin-left:auto;margin-right:5px"></div><div class="t"><x-icon name="kbd" w="10"></x-icon><x-icon name="t1" w="10"></x-icon><x-icon name="t2" w="10"></x-icon><x-icon name="t3" w="10"></x-icon><x-icon name="t4" w="10"></x-icon><x-icon name="t5" w="10"></x-icon><x-icon name="t6" w="10"></x-icon><x-icon name="t7" w="10"></x-icon><x-icon name="t8" w="10"></x-icon></div><div class="k"><fit-text t="23:49" w="20"></fit-text><fit-text t="2018/7/1" w="32"></fit-text></div><div class="e"></div>`);

def('color-menu',`:host{display:block;width:108px;height:129px;background:#fafafa;border:1px solid #929fb4;box-sizing:border-box;font:8px/12px ${UI};color:#333;box-shadow:1px 1px 2px #0005}
.a{height:16px;display:flex;align-items:center;padding-left:3px;gap:6px}.a i{width:9px;height:9px;background:#000;border:2px solid #e1bc83;box-sizing:content-box;margin-left:-1px}.h{height:13px;background:#dde7ee;color:#00156e;font-weight:bold;font-size:7.700px;padding-left:7px}
.s{display:flex;justify-content:space-between;padding:2px 2px 2px 2px}.s i{width:8px;height:8px;border:1px solid #d5d8dc;box-sizing:border-box}.g i{display:block;border-width:0 1px;height:8px}.m{height:15px;display:flex;align-items:center;border-top:1px solid #e1e3e6;gap:8px;padding-left:4px;color:#223c78}`,
`<div class="a"><i></i><fit-text t="自动" w="15"></fit-text></div><div class="h"><fit-text t="主题颜色" w="31"></fit-text></div><div class="s" id="t"></div><div class="s g" id="g"></div><div class="h" style="margin-top:1px"><fit-text t="标准色" w="23"></fit-text></div><div class="s" id="d"></div><div class="m"><x-icon name="pal" w="9"></x-icon><fit-text t="其他颜色(M)..." w="48"></fit-text></div>`,(el,r)=>{
  const sw=c=>`<i style="background:${c}"></i>`;
  r.getElementById('t').innerHTML=['#fff','#000','#eeece1','#1f497d','#4f81bd','#c0504d','#9bbb59','#8064a2','#4bacc6','#f79646'].map(sw).join('');
  r.getElementById('g').innerHTML=[['#f2f2f2','#d8d8d8','#bfbfbf','#a5a5a5','#7f7f7f'],['#7f7f7f','#595959','#3f3f3f','#262626','#0c0c0c'],['#ddd9c3','#c4bd97','#938953','#494429','#1d1b10'],['#c6d9f0','#8db3e2','#548dd4','#17365d','#0f243e'],['#dbe5f1','#b8cce4','#95b3d7','#366092','#244061'],['#f2dcdb','#e5b9b7','#d99694','#953734','#632423'],['#ebf1dd','#d7e3bc','#c3d69b','#76923c','#4f6128'],['#e5e0ec','#ccc1d9','#b2a2c7','#5f497a','#3f3151'],['#dbeef3','#b7dde8','#92cddc','#31859b','#205867'],['#fdeada','#fbd5b5','#fac08f','#e36c09','#974806']].map(a=>'<div>'+a.map(sw).join('')+'</div>').join('');
  r.getElementById('d').innerHTML=['#c00000','#f00','#ffc000','#ff0','#92d050','#00b050','#00b0f0','#0070c0','#002060','#7030a0'].map(sw).join('');
  r.querySelector('#d i:nth-child(2)').style.cssText+='border:1px solid #ef9a70';
});
def('tool-tip',`:host{display:block;box-sizing:border-box;width:21px;height:16px;border:1px solid #76879f;border-radius:2px;background:linear-gradient(#fff,#d5e0ef);font:8px/13px ${UI};color:#444;text-align:center;box-shadow:1px 1px 1px #0004}`,'<slot></slot>');
/* Hand-drawn marks laid over the window. */
def('pink-marks',':host{display:block}svg{display:block}',`<svg width="800" height="640"><g fill="none" stroke="#f4729c" stroke-width="5.500" stroke-linecap="round"><circle cx="175.700" cy="65" r="29.700"/><path d="M230 54.500Q300 36 371 13.500M535 234l144 110"/></g><path d="M213 60l22-22-5 14 0 6 13 9zM521.500 224l31.500 4.500-15 3-4 5-.5 16z" fill="#f4729c"/></svg>`);
def('site-mark',`:host{display:block;width:146px;height:70px;color:#ffffffd8;font-family:"Liberation Sans","Noto Sans CJK SC",sans-serif}
.a{display:flex;align-items:flex-end;height:44px;-webkit-text-stroke:.7px #b4b9be}.b{font:bold 31px/30px "Liberation Sans"}.c{font:bold 24px/31px "Noto Sans CJK SC"}.p{width:45px;height:43px;display:flex;align-items:flex-end;justify-content:center;position:relative}.p svg{position:absolute;inset:0}.p span{font:bold 16px/22px "Liberation Sans";position:relative}.u{font:17.500px/20px "Open Sans","Liberation Sans",sans-serif;color:#fff;text-shadow:0 0 1px #567;margin:4px 0 0 2px}`,
`<div class="a"><fit-text class="b" t="Bai" w="46"></fit-text><div class="p"><svg width="45" height="43" fill="#ffffffb0" stroke="#bfc4c9"><ellipse cx="17" cy="9" rx="5" ry="7"/><ellipse cx="30" cy="9" rx="5" ry="7"/><ellipse cx="6" cy="20" rx="5" ry="6"/><ellipse cx="39" cy="21" rx="5" ry="6"/><path d="M8 41q-6-7 5-14 6-9 12-7 5 1 9 7 11 7 3 14-7 2-15 0-7 2-14 0z"/></svg><span>du</span></div><fit-text class="c" t="经验" w="48"></fit-text></div><fit-text class="u" t="jingyan.baidu.com" w="141"></fit-text>`);
def('excel-window',`:host{display:flex;flex-direction:column;position:relative;width:800px;height:640px;overflow:hidden;background:#bfdbff;font:9px ${UI}}
.m{display:flex}.o{position:absolute}`,
`<title-bar></title-bar><tab-strip></tab-strip><ribbon-bar></ribbon-bar><formula-bar></formula-bar>
<div class="m"><sheet-grid></sheet-grid><v-scroll></v-scroll></div>
<sheet-tabs></sheet-tabs><status-bar></status-bar><task-bar></task-bar>
<x-icon class="o" style="left:1px;top:0" name="office" w="25" v="26 26"></x-icon>
<color-menu class="o" style="left:173px;top:79px"></color-menu>
<tool-tip class="o" style="left:193px;top:199px">红色</tool-tip>
<site-mark class="o" style="left:613px;top:554px"></site-mark>
<pink-marks class="o" style="left:0;top:0"></pink-marks>`);
</script>
</body>
</html>
